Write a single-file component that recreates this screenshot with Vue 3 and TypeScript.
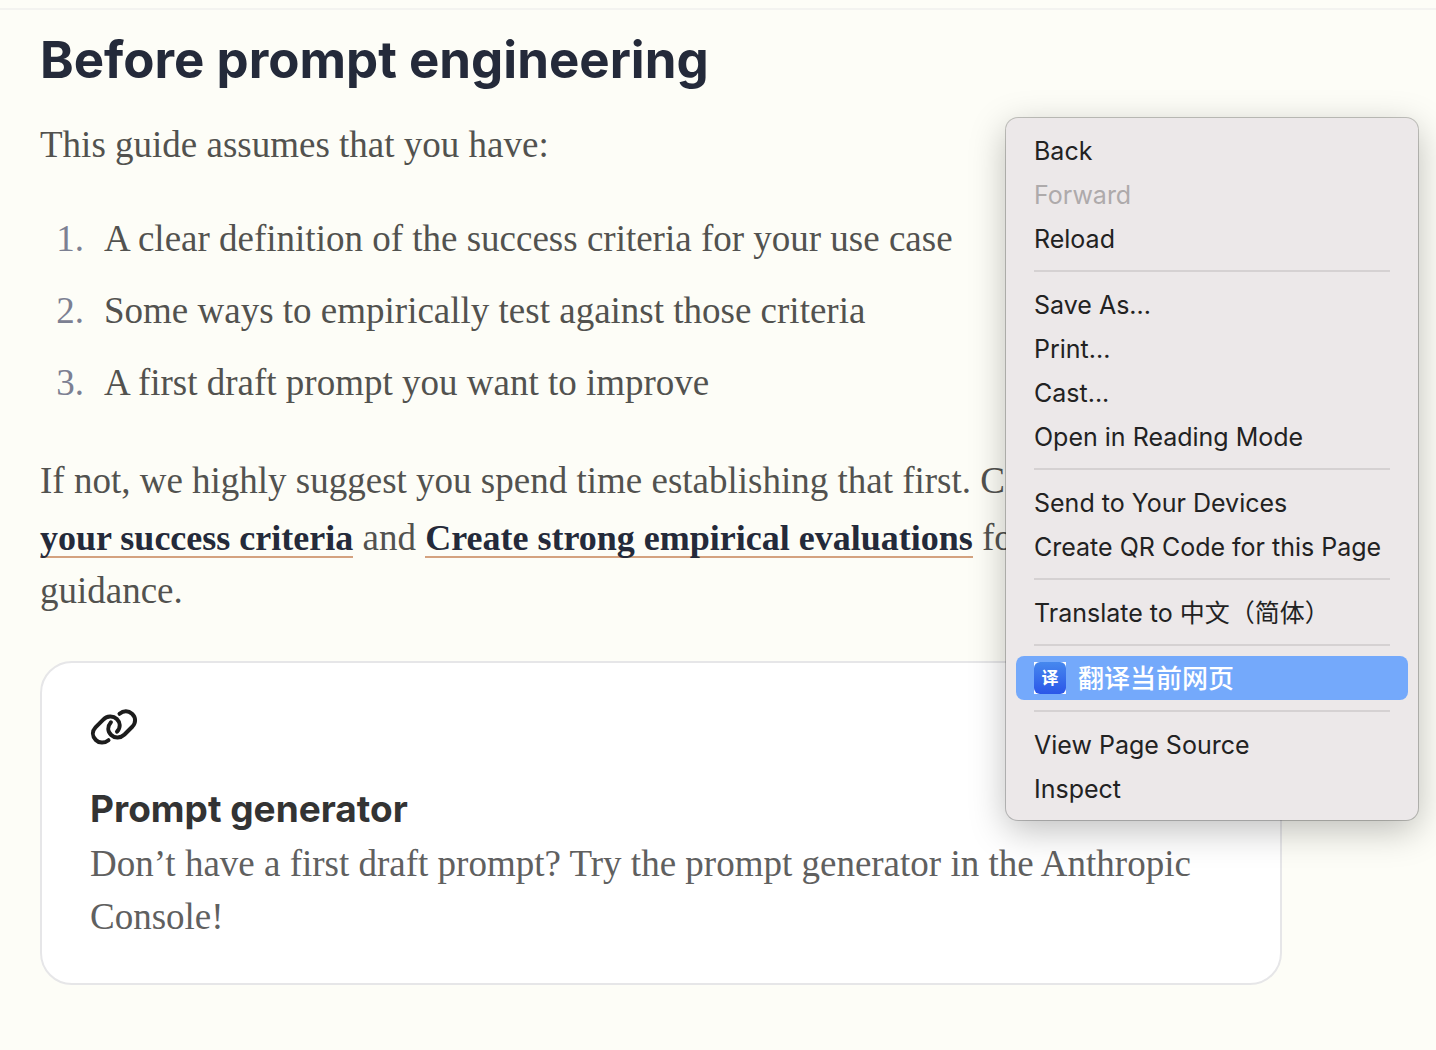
<script setup lang="ts">
interface MenuItem {
  label: string
  disabled?: boolean
  active?: boolean
}

const requirements: string[] = [
  'A clear definition of the success criteria for your use case',
  'Some ways to empirically test against those criteria',
  'A first draft prompt you want to improve',
]

const menuGroups: MenuItem[][] = [
  [{ label: 'Back' }, { label: 'Forward', disabled: true }, { label: 'Reload' }],
  [{ label: 'Save As...' }, { label: 'Print...' }, { label: 'Cast...' }, { label: 'Open in Reading Mode' }],
  [{ label: 'Send to Your Devices' }, { label: 'Create QR Code for this Page' }],
  [{ label: 'Translate to 中文（简体）' }],
  [{ label: '翻译当前网页', active: true }],
  [{ label: 'View Page Source' }, { label: 'Inspect' }],
]
</script>

<template>
  <div class="page">
    <main class="content">
      <h2 class="title">Before prompt engineering</h2>
      <p class="text">This guide assumes that you have:</p>
      <ol class="steps">
        <li v-for="item in requirements" :key="item">{{ item }}</li>
      </ol>
      <p class="text">
        If not, we highly suggest you spend time establishing that first. C<br />
        <a class="link" href="#success">your success criteria</a> and
        <a class="link" href="#evaluations">Create strong empirical evaluations</a> fo<br />
        guidance.
      </p>
      <a class="card" href="#generator">
        <svg class="card-icon" viewBox="0 0 48 48" aria-hidden="true">
          <path d="M18.500 37.200 C14.500 40.500 9 40.300 5.800 37 C2 33 2 28 5.500 24.300 L13 16.800 C17 12.800 23 12.500 26.800 16 C30.400 19.500 30.800 24.500 27 28.700" />
          <path d="M29.500 10.800 C33.500 7.500 38.500 7.600 42 10.800 C46 14.500 46 19.800 42.500 23.500 L34.500 31.500 C30.500 35.300 24.800 35.500 21.200 32 C17.500 28.500 17.300 23.500 20.900 19.300" />
        </svg>
        <h3 class="card-title">Prompt generator</h3>
        <p class="card-text">
          Don’t have a first draft prompt? Try the prompt generator in the Anthropic Console!
        </p>
      </a>
    </main>

    <div class="menu" role="menu">
      <div v-for="(group, index) in menuGroups" :key="index" class="group" role="group">
        <button
          v-for="item in group"
          :key="item.label"
          class="item"
          :class="{ active: item.active }"
          :disabled="item.disabled"
          type="button"
          role="menuitem"
        >
          <span v-if="item.active" class="badge" aria-hidden="true"><span class="badge-face">译</span></span>
          <span class="label">{{ item.label }}</span>
        </button>
      </div>
    </div>
  </div>
</template>

<style>
body {
  margin: 0;
  background: #fdfdf7;
}
</style>

<style scoped>
.page {
  position: relative;
  box-sizing: border-box;
  min-height: 100vh;
  padding-top: 8px;
  overflow: hidden;
  background: #fdfdf7;
  font-family: "Liberation Serif", "Noto Sans CJK SC", serif;
}

.content {
  padding: 18px 154px 64px 40px;
  border-top: 2px solid #f3f3f0;
}

.title {
  margin: 0 0 26px;
  color: #242a3a;
  font: 700 51px/64px Inter, sans-serif;
}

.text {
  margin: 0;
  color: #52524f;
  font-size: 37px;
  line-height: 53px;
  white-space: nowrap;
}

.steps {
  margin: 40px 0 43px;
  padding: 0;
  color: #52524f;
  font-size: 37px;
  line-height: 56px;
  list-style: none;
  counter-reset: step;
}

.steps li {
  display: flex;
  gap: 20px;
  counter-increment: step;
}

.steps li + li {
  margin-top: 16px;
}

.steps li::before {
  width: 44px;
  color: #7c8092;
  text-align: right;
  content: counter(step) ".";
}

.link {
  display: inline-block;
  padding-top: 13px;
  border-bottom: 2px solid #d4a27f;
  color: #242a3a;
  font-size: 36px;
  font-weight: 600;
  line-height: 36px;
  text-decoration: none;
}

.card {
  display: block;
  margin-top: 44px;
  padding: 40px 48px;
  border: 2px solid #e6e6e8;
  border-radius: 32px;
  background: #fff;
  color: #60605f;
  text-decoration: none;
}

.card-icon {
  display: block;
  width: 48px;
  height: 48px;
  fill: none;
  stroke: #1c1c1c;
  stroke-width: 4;
  stroke-linecap: round;
}

.card-title {
  margin: 38px 0 8px;
  color: #333;
  font: 700 37px/40px Inter, sans-serif;
}

.card-text {
  margin: 0;
  font-size: 37px;
  line-height: 53px;
}

.menu {
  position: absolute;
  top: 118px;
  right: 18px;
  box-sizing: border-box;
  width: 412px;
  padding: 10px;
  border-radius: 12px;
  background: #ece8e9;
  box-shadow: 0 0 0 1px rgba(0, 0, 0, 0.22), 0 10px 36px rgba(0, 0, 0, 0.26);
}

.group + .group::before {
  display: block;
  height: 2px;
  margin: 10px 18px;
  background: #d5d1d2;
  content: "";
}

.item {
  display: flex;
  align-items: center;
  gap: 12px;
  width: 100%;
  height: 44px;
  padding: 0 18px;
  border: 0;
  border-radius: 8px;
  background: none;
  color: #222;
  font: 400 25px/40px Inter, "Noto Sans CJK SC", sans-serif;
  text-align: left;
  white-space: nowrap;
}

.item:disabled {
  color: #aeaaab;
}

.item.active {
  background: #74a9fb;
  color: #fff;
  font-size: 26px;
  font-weight: 500;
}

.label {
  padding-top: 2px;
}

.badge {
  width: 32px;
  height: 32px;
  background: #fff;
}

.badge-face {
  display: block;
  border-radius: 6px;
  background: linear-gradient(#4688ee, #2b56e8);
  font-size: 17px;
  font-weight: 700;
  line-height: 32px;
  text-align: center;
}
</style>
